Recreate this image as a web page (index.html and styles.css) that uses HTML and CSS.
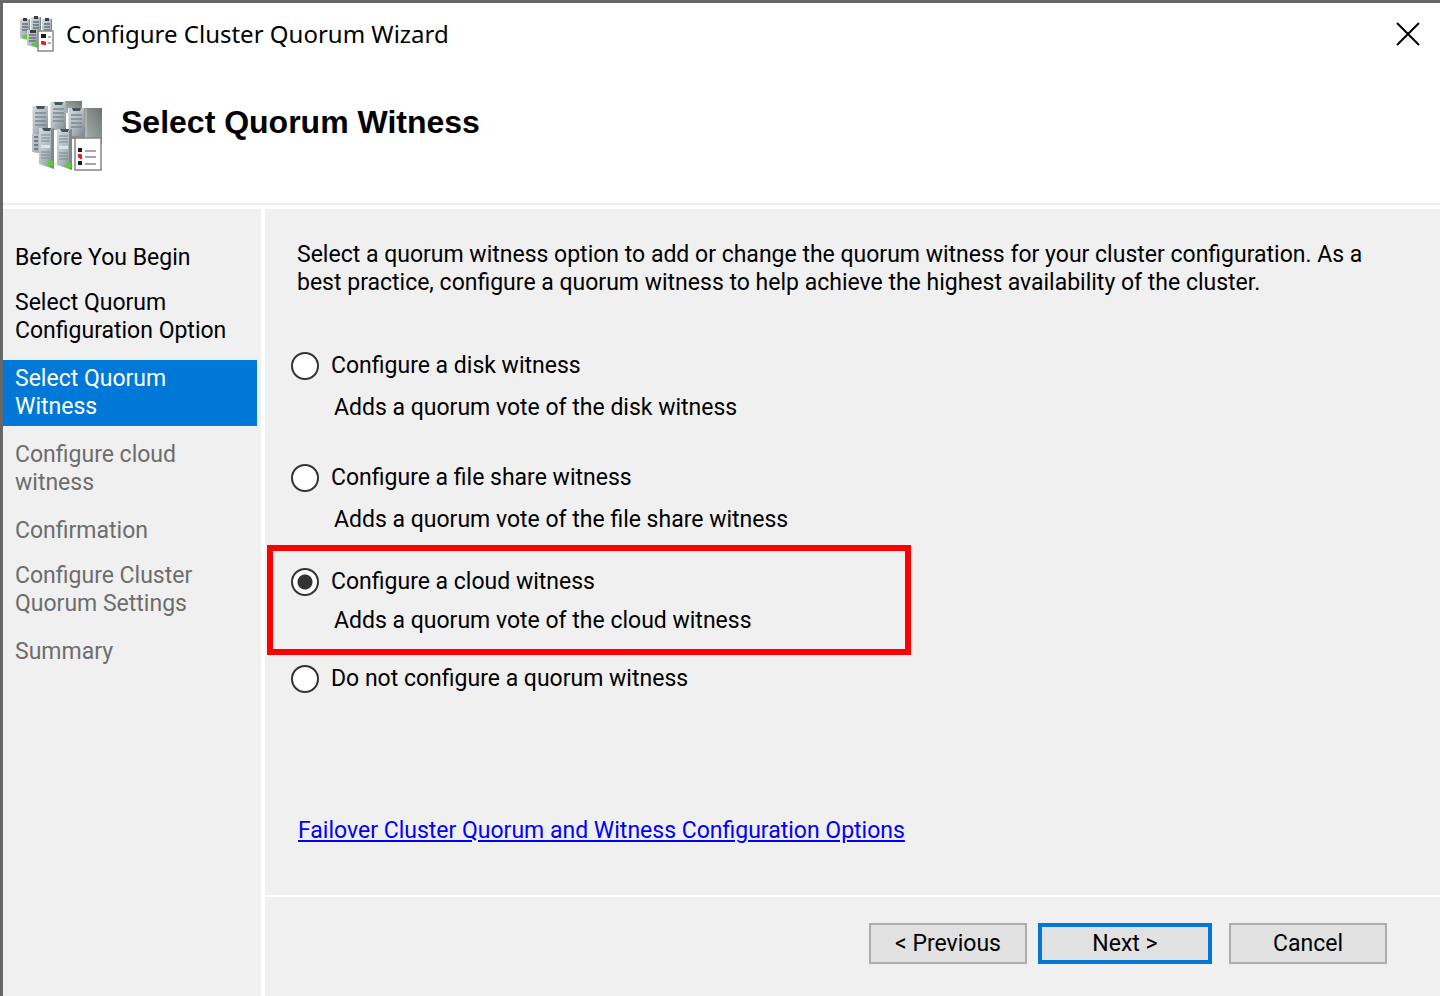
FILE: index.html
```html
<!DOCTYPE html>
<html lang="en">
<head>
<meta charset="UTF-8" />
<meta name="viewport" content="width=device-width, initial-scale=1" />
<title>Configure Cluster Quorum Wizard</title>
<link rel="stylesheet" href="styles.css">
</head>
<body>
  <div class="wizard">
    <header class="titlebar">
      <svg class="titlebar-icon" viewBox="0 0 36 36" aria-hidden="true">
        <defs>
          <linearGradient id="steel" x1="0" y1="0" x2="1" y2="1">
            <stop offset="0" stop-color="#d3dadd" />
            <stop offset="0.5" stop-color="#b4bdc2" />
            <stop offset="1" stop-color="#7c878d" />
          </linearGradient>
          <linearGradient id="side" x1="1" y1="0" x2="0" y2="1">
            <stop offset="0" stop-color="#69736f" />
            <stop offset="1" stop-color="#b3bab9" />
          </linearGradient>
          <g id="small-tower">
            <path d="M0 1h10v20l-2 1-8-2z" fill="url(#steel)" />
            <path d="M9 1h1v20l-1 .5z" fill="#7d888d" />
            <path d="M3 0h4v3H3z" fill="#363f45" />
            <path d="M2 6h6M2 9h6M2 12h6" stroke="#63717a" stroke-width="1.3" />
          </g>
        </defs>
        <use href="#small-tower" x="1" y="2" />
        <use href="#small-tower" x="12" y="0" />
        <use href="#small-tower" x="23" y="2" />
        <path d="M4 19h4v4H4z" fill="#55d629" />
        <path d="M8 14h11v18l-3-1-8-2z" fill="url(#steel)" />
        <path d="M11 14h6v3h-6z" fill="#363f45" />
        <path d="M10 19h7M10 22h7M10 25h7" stroke="#63717a" stroke-width="1.3" />
        <path d="M13 27h5v3h-5z" fill="#40dc16" />
        <path d="M19 15h15v20H19z" fill="#fff" stroke="#8b8b8b" stroke-width="1.5" />
        <path d="M22 18h5v4h-5z" fill="#161c22" />
        <path d="M22 25h3l2 1v3h-3l-2-1z" fill="#e62225" />
        <path d="M29 21h3M29 27h3" stroke="#9797b2" stroke-width="1.5" />
      </svg>
      <span class="titlebar-text">Configure Cluster Quorum Wizard</span>
      <button type="button" class="close" aria-label="Close">
        <svg viewBox="0 0 22 22" aria-hidden="true"><path d="M0 0 22 22M22 0 0 22" /></svg>
      </button>
    </header>

    <div class="banner">
      <svg class="banner-icon" viewBox="0 0 72 72" aria-hidden="true">
        <defs>
          <g id="tower">
            <path d="M0 0h16v28H0z" fill="url(#steel)" />
            <path d="M0 0h1v28H0z" fill="#e1e6e8" />
            <path d="M4 0h9l-1 3H5z" fill="#48545b" />
            <path d="M3 7h11M3 11h11M3 15h11M3 19h11" stroke="#798992" stroke-width="1.3" />
          </g>
          <g id="tall-tower">
            <path d="M0 0h15v41L0 36z" fill="url(#steel)" />
            <path d="M12 1l3-1v41l-3-2z" fill="#7d898f" />
            <path d="M3 0h9l-1 3H5z" fill="#45525a" />
            <path d="M2 7h9M2 10h9M2 13h9M2 24h9M2 27h9M2 30h9" stroke="#758892" stroke-width="1.2" />
            <path d="M2 17h9v3H2z" fill="#dbe4e7" />
          </g>
        </defs>
        <path d="M34 1h17v12H34z" fill="url(#side)" />
        <path d="M51 8h20v36H51z" fill="url(#side)" />
        <path d="M55 9v30" stroke="#bdc4c4" />
        <path d="M1 6h16v49l-4-1-12-2z" fill="url(#steel)" />
        <path d="M5 28v24" stroke="#6d7b83" stroke-width="4" stroke-dasharray="2 2" />
        <path d="M40 27h14v12H40z" fill="#858e90" />
        <use href="#tower" x="1" y="6" />
        <use href="#tower" x="19" y="2" />
        <use href="#tower" x="37" y="8" />
        <use href="#tall-tower" x="8" y="28" />
        <use href="#tall-tower" x="26" y="29" />
        <path d="M17 61h5v5l-5-1zM35 63h5v5l-5-1z" fill="#4cd916" />
        <path d="M44 38h26v32H44z" fill="#fff" stroke="#858585" stroke-width="1.5" />
        <path d="M47 48h4v4h-4zM47 61h4v4h-4z" fill="#171c22" />
        <path d="M47 54h3l1 1v4h-2l-2-2z" fill="#e41d20" />
        <path d="M54 51h11M54 57h11M54 64h11" stroke="#8883a1" stroke-width="1.5" />
      </svg>
      <h1>Select Quorum Witness</h1>
    </div>

    <div class="body">
      <nav class="steps" aria-label="Wizard steps">
        <ol>
          <li>Before You Begin</li>
          <li class="two-line">Select Quorum Configuration Option</li>
          <li class="two-line active" aria-current="step">Select Quorum Witness</li>
          <li class="two-line pending">Configure cloud witness</li>
          <li class="pending">Confirmation</li>
          <li class="two-line pending">Configure Cluster Quorum Settings</li>
          <li class="pending">Summary</li>
        </ol>
      </nav>

      <form class="page">
        <main class="content">
          <p class="intro" id="intro">Select a quorum witness option to add or change the quorum witness for your cluster configuration. As a best practice, configure a quorum witness to help achieve the highest availability of the cluster.</p>

          <div class="options" role="radiogroup" aria-labelledby="intro">
            <div class="option">
              <input type="radio" name="witness" id="disk" aria-describedby="disk-text">
              <label for="disk">Configure a disk witness</label>
              <p id="disk-text">Adds a quorum vote of the disk witness</p>
            </div>
            <div class="option">
              <input type="radio" name="witness" id="share" aria-describedby="share-text">
              <label for="share">Configure a file share witness</label>
              <p id="share-text">Adds a quorum vote of the file share witness</p>
            </div>
            <div class="option highlight">
              <input type="radio" name="witness" id="cloud" aria-describedby="cloud-text" checked>
              <label for="cloud">Configure a cloud witness</label>
              <p id="cloud-text">Adds a quorum vote of the cloud witness</p>
            </div>
            <div class="option">
              <input type="radio" name="witness" id="none">
              <label for="none">Do not configure a quorum witness</label>
            </div>
          </div>

          <a class="help" href="#">Failover Cluster Quorum and Witness Configuration Options</a>
        </main>

        <footer class="actions">
          <button type="button">&lt; Previous</button>
          <button type="submit" class="default">Next &gt;</button>
          <button type="button" class="cancel">Cancel</button>
        </footer>
      </form>
    </div>
  </div>
</body>
</html>
```
FILE: styles.css
```css
* {
  box-sizing: border-box;
}
body {
  margin: 0;
  background: #666;
  color: #000;
  font-family: Roboto, 'Liberation Sans', Arial, sans-serif;
  font-size: 23px;
  line-height: 28px;
}
p, h1, ol {
  margin: 0;
  padding: 0;
}
.wizard {
  display: flex;
  flex-direction: column;
  min-height: 100vh;
  border-top: 3px solid #666;
  border-left: 3px solid #666;
  background: #fff;
}

/* Title bar */
.titlebar {
  display: flex;
  align-items: center;
  height: 62px;
  padding: 0 21px 0 16px;
}
.titlebar-icon {
  width: 36px;
  height: 36px;
}
.titlebar-text {
  flex: 1;
  margin-left: 11px;
  font-family: 'Noto Sans', 'Open Sans', sans-serif;
  font-size: 24px;
}
.close {
  display: flex;
  padding: 0;
  border: none;
  background: none;
}
.close svg {
  width: 22px;
  height: 22px;
  overflow: visible;
  stroke: #000;
  stroke-width: 2;
}

/* Heading band */
.banner {
  display: flex;
  gap: 18px;
  height: 140px;
  padding: 35px 28px;
  border-bottom: 2px solid #f0f0f0;
}
.banner-icon {
  width: 72px;
  height: 72px;
}
h1 {
  padding-top: 8px;
  font-family: 'Liberation Sans', Arial, sans-serif;
  font-size: 32px;
  line-height: 28px;
}

/* Steps and page */
.body {
  flex: 1;
  display: flex;
  gap: 4px;
  margin-top: 4px;
}
.steps {
  width: 258px;
  padding: 30px 4px 30px 0;
  background: #f0f0f0;
}
.steps ol {
  display: flex;
  flex-direction: column;
  gap: 7px;
  list-style: none;
}
.steps li {
  padding: 5px 20px 5px 12px;
}
.steps .two-line {
  margin-bottom: 3px;
}
.steps .active {
  padding-right: 60px;
  background: #0078d7;
  color: #fff;
}
.steps .pending {
  color: #6d6d6d;
}
.page {
  flex: 1;
  display: flex;
  flex-direction: column;
  background: #f0f0f0;
}
.content {
  flex: 1;
  padding: 32px 0;
}
.intro {
  padding: 0 60px 0 32px;
}
.options {
  margin-top: 55px;
}
.option {
  display: grid;
  grid-template-columns: 28px 1fr;
  column-gap: 12px;
  row-gap: 14px;
  margin-bottom: 42px;
  padding: 0 26px;
}
.option p {
  grid-column: 2;
  padding-left: 3px;
}
.option:has(+ .highlight) {
  margin-bottom: 11px;
}
.highlight {
  row-gap: 11px;
  max-width: 644px;
  margin: 0 2px 10px;
  padding: 17px 18px 14px;
  border: 6px solid #f00;
}
input[type="radio"] {
  appearance: none;
  width: 28px;
  height: 28px;
  margin: 0;
  border: 2px solid #333;
  border-radius: 50%;
  background: #fff;
}
input[type="radio"]:checked {
  background: radial-gradient(circle, #333 7px, #fff 8px);
}
.help {
  display: inline-block;
  margin: 82px 33px 0;
  color: #00f;
}

/* Buttons */
.actions {
  display: flex;
  justify-content: flex-end;
  gap: 11px;
  padding: 26px 53px 32px;
  border-top: 2px solid #fff;
}
.actions button {
  width: 158px;
  height: 41px;
  padding: 0;
  border: 2px solid #adadad;
  background: #e1e1e1;
  color: #000;
  font: inherit;
}
.actions .default {
  width: 174px;
  border: 4px solid #0078d7;
}
.actions .cancel {
  margin-left: 6px;
}
```
